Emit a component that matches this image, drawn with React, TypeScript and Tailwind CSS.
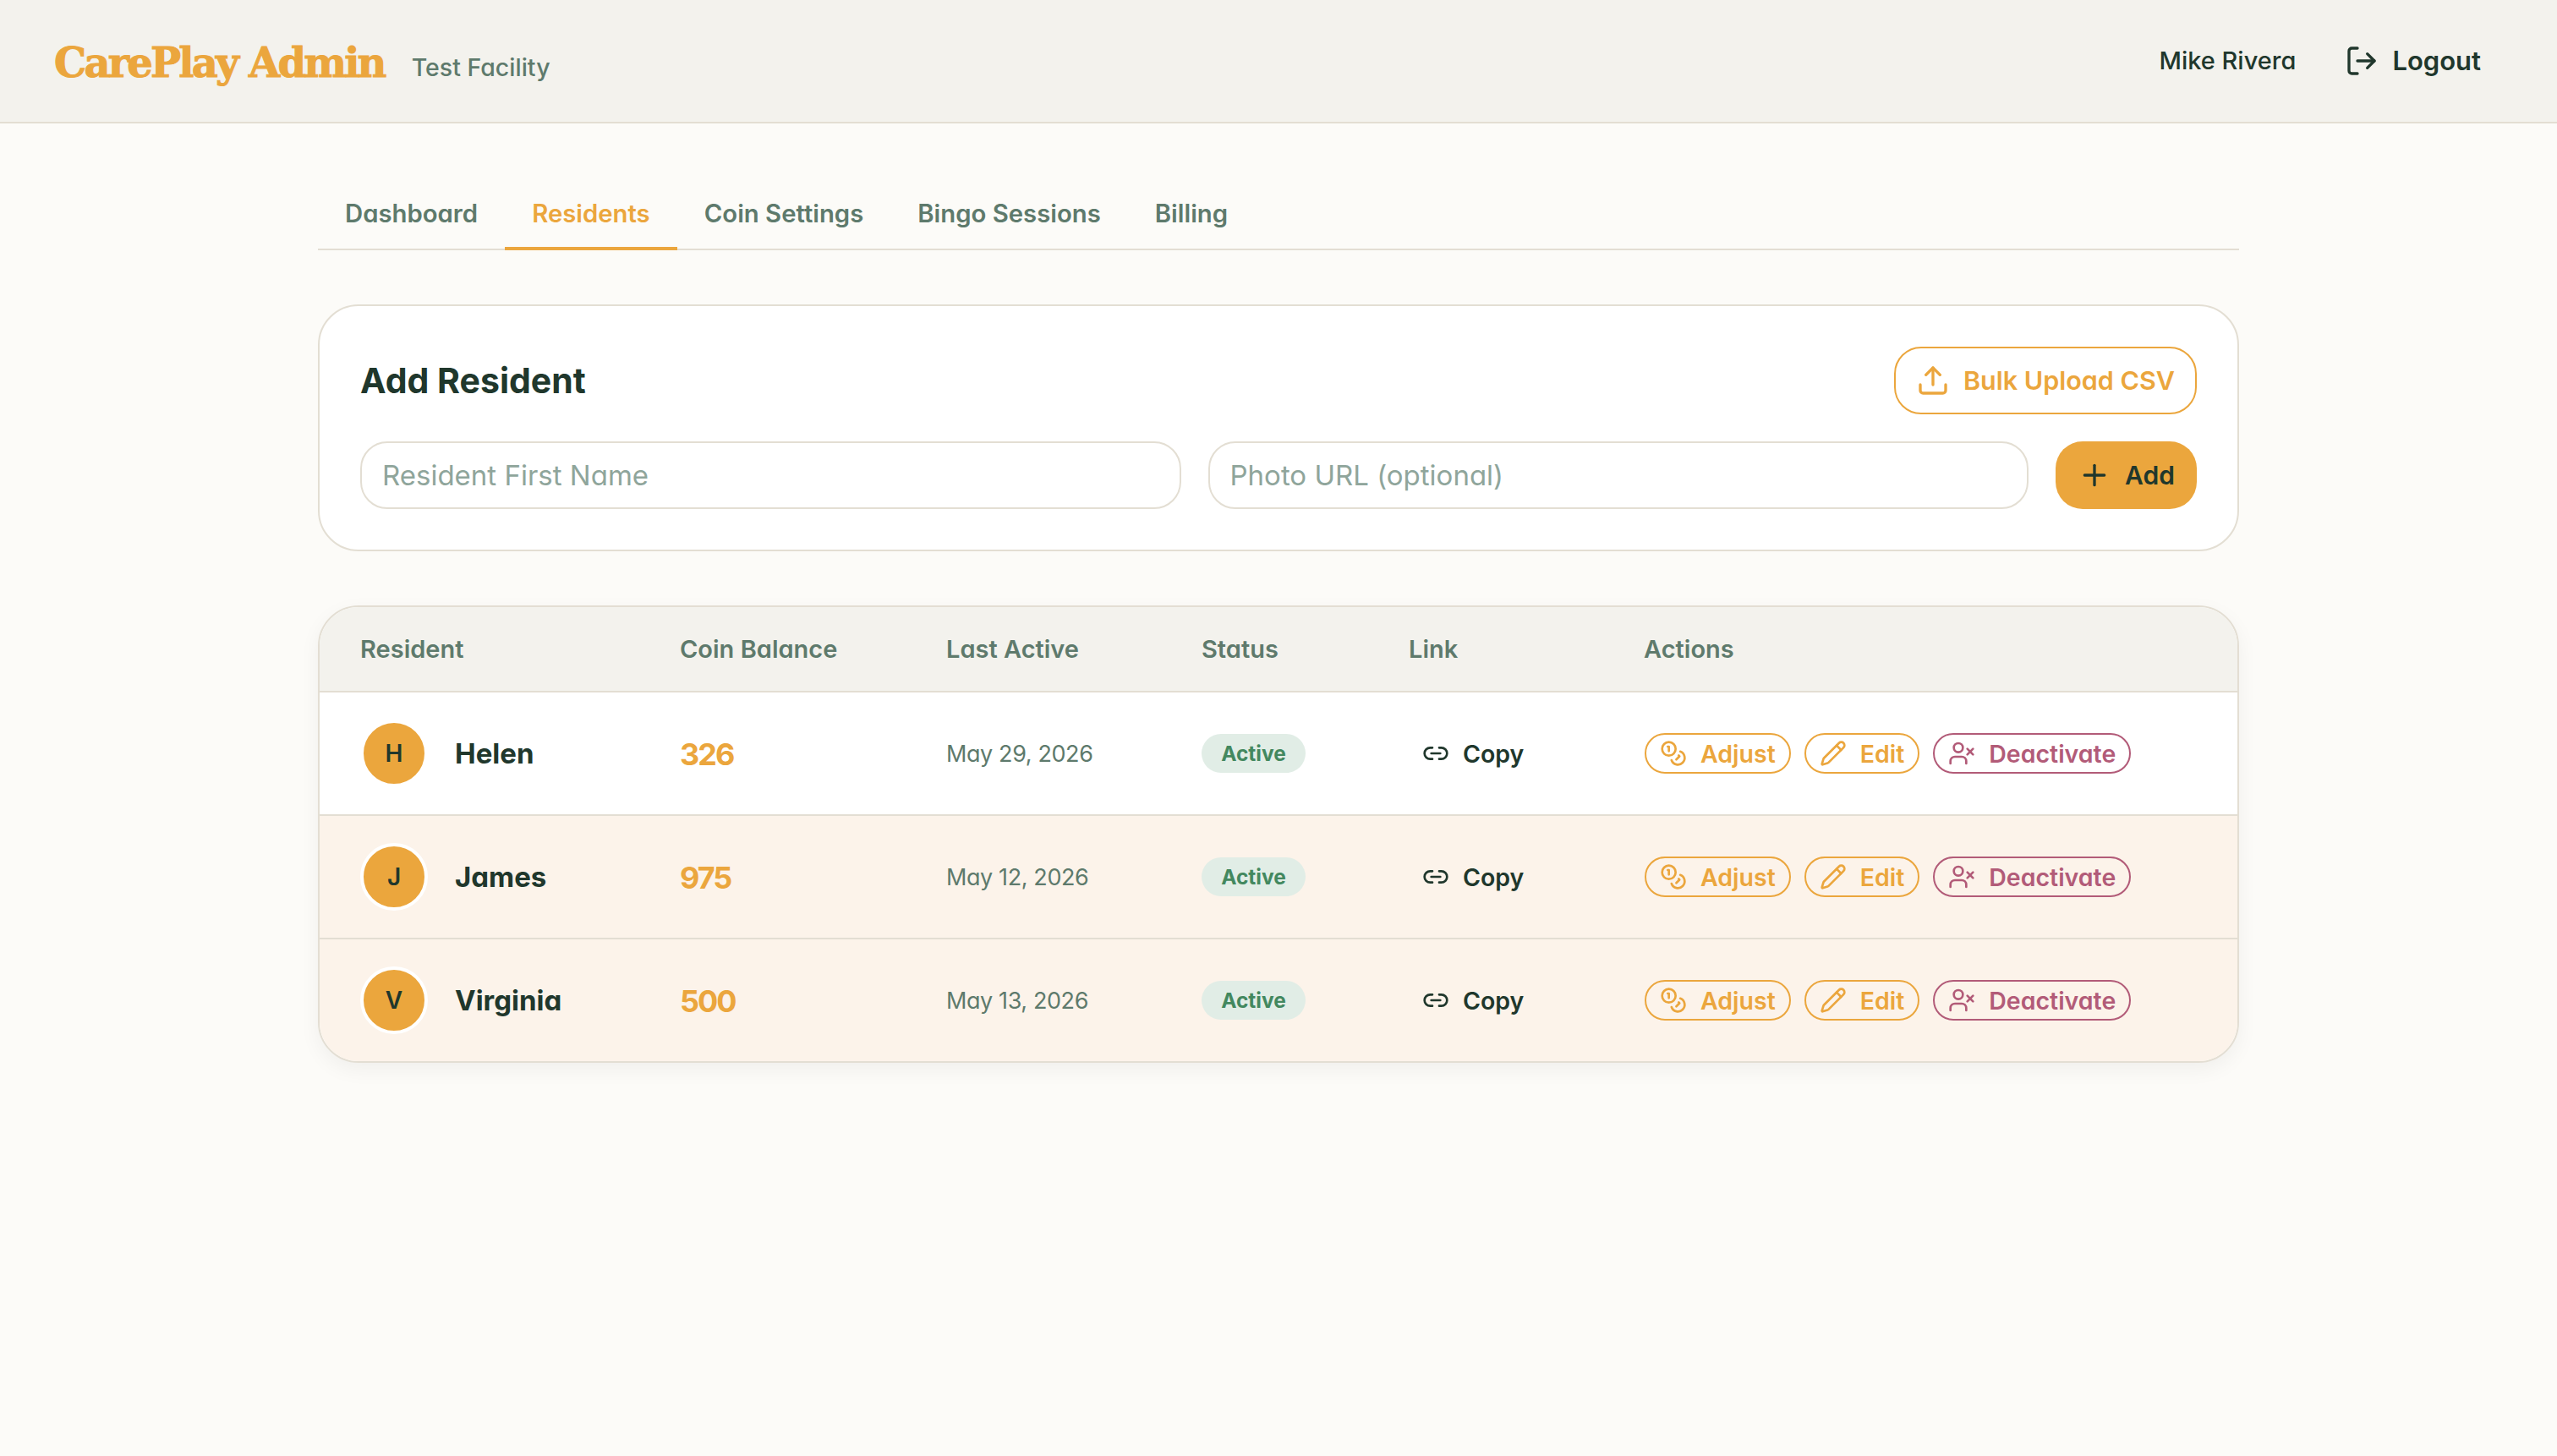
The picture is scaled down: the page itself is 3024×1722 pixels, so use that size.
import { Coins, Link2, LogOut, Pencil, Plus, Upload, UserX } from 'lucide-react'

const tabs = ['Dashboard', 'Residents', 'Coin Settings', 'Bingo Sessions', 'Billing']

const residents = [
  { name: 'Helen', coins: 326, lastActive: 'May 29, 2026', bg: 'bg-white' },
  { name: 'James', coins: 975, lastActive: 'May 12, 2026', bg: 'bg-[#fcf3ea]' },
  { name: 'Virginia', coins: 500, lastActive: 'May 13, 2026', bg: 'bg-[#fcf3ea]' },
]

const gridCols = 'grid grid-cols-[378px_315px_302px_245px_278px_1fr] items-center'

const ActionButton = ({
  icon: Icon,
  label,
  danger,
}: {
  icon: typeof Coins
  label: string
  danger?: boolean
}) => (
  <button
    className={`flex h-12 items-center gap-4 rounded-full border-2 bg-transparent px-4 text-[28.5px] font-semibold ${
      danger ? 'border-[#b25b78] text-[#b25b78]' : 'border-[#eba63d] text-[#eba63d]'
    }`}
  >
    <Icon className="h-8 w-8" strokeWidth={2} />
    <span className="pt-0.5">{label}</span>
  </button>
)

export default function App() {
  return (
    <div className="min-h-[1722px] bg-[#fcfbf8] font-['Inter',sans-serif] text-[#20372c] [font-feature-settings:'cv11']">
      {/* header */}
      <header className="flex h-[146px] items-center justify-between border-b-2 border-[#e3ded3] bg-[#f3f2ed] pr-[90px] pl-16">
        <div className="flex items-end gap-8">
          <span className="pt-1 font-['DejaVu_Serif',serif] text-[48px] leading-[64px] font-bold tracking-[-2.8px] text-[#eba63d] [-webkit-text-stroke:1px_#eba63d]">
            CarePlay Admin
          </span>
          <span className="pb-0.5 text-[28.5px] leading-[48px] font-medium text-[#5e7a6c]">Test Facility</span>
        </div>
        <div className="flex items-center font-semibold">
          <span className="text-[29px] font-medium">Mike Rivera</span>
          <button className="ml-[58px] flex items-center gap-4 text-[31px]">
            <LogOut className="h-10 w-10" strokeWidth={2} />
            Logout
          </button>
        </div>
      </header>

      <main className="mx-auto w-[2272px] pt-[64px]">
        {/* tabs */}
        <nav className="flex h-[86px] border-b-2 border-[#e3ded3]">
          {tabs.map((tab) => (
            <button
              key={tab}
              className={`h-[86px] border-b-4 px-8 pt-1 text-[29.3px] font-semibold ${
                tab === 'Residents' ? 'border-[#eba63d] text-[#eba63d]' : 'border-transparent text-[#5e7a6c]'
              }`}
            >
              {tab}
            </button>
          ))}
        </nav>

        {/* add resident */}
        <section className="mt-[64px] rounded-[48px] border-2 border-[#e3ded3] bg-white p-12">
          <div className="flex items-center justify-between">
            <h2 className="pt-0.5 text-[41px] font-bold">Add Resident</h2>
            <button className="flex h-20 items-center gap-4 rounded-[32px] border-2 border-[#eba63d] px-6 text-[30.5px] font-semibold text-[#eba63d]">
              <Upload className="h-10 w-10" strokeWidth={2} />
              Bulk Upload CSV
            </button>
          </div>
          <div className="mt-8 flex gap-8">
            <input
              placeholder="Resident First Name"
              className="h-20 min-w-0 flex-1 rounded-[32px] border-2 border-[#e3ded3] bg-white px-6 text-[33px] outline-none placeholder:text-[#8fa59b]"
            />
            <input
              placeholder="Photo URL (optional)"
              className="h-20 min-w-0 flex-1 rounded-[32px] border-2 border-[#e3ded3] bg-white px-6 text-[33px] outline-none placeholder:text-[#8fa59b]"
            />
            <button className="flex h-20 w-[167px] shrink-0 items-center justify-center gap-4 rounded-[32px] bg-[#eba63d] text-[30px] font-semibold">
              <Plus className="h-10 w-10" strokeWidth={2} />
              Add
            </button>
          </div>
        </section>

        {/* residents table */}
        <section className="mt-[64px] overflow-hidden rounded-[48px] border-2 border-[#e3ded3] bg-white shadow-[0_8px_24px_rgba(0,0,0,0.05)]">
          <div className={`${gridCols} h-[101px] border-b-2 border-[#e3ded3] bg-[#f3f2ed] text-[29px] font-semibold text-[#5e7a6c]`}>
            <div className="pl-12">Resident</div>
            <div className="pl-12">Coin Balance</div>
            <div className="pl-12">Last Active</div>
            <div className="pl-12">Status</div>
            <div className="pl-12">Link</div>
            <div className="pl-12">Actions</div>
          </div>
          {residents.map((resident, index) => (
            <div
              key={resident.name}
              className={`${gridCols} ${resident.bg} ${
                index < residents.length - 1 ? 'h-[146px] border-b-2 border-[#e3ded3]' : 'h-[144px]'
              }`}
            >
              <div className="flex items-center gap-8 pl-12">
                <div className="flex h-20 w-20 items-center justify-center rounded-full border-4 border-white bg-[#eba63d] text-[28px] font-semibold">
                  {resident.name[0]}
                </div>
                <span className="pt-0.5 text-[33px] font-bold">{resident.name}</span>
              </div>
              <div className="pt-0.5 pl-12 text-[36px] font-bold tracking-[-2px] text-[#eba63d]">{resident.coins}</div>
              <div className="pt-0.5 pl-12 text-[27px] tracking-[-0.4px] text-[#5e7a6c]">{resident.lastActive}</div>
              <div className="pl-12">
                <span className="inline-flex h-[46px] w-[123px] items-center justify-center rounded-full bg-[#e1ede6] text-[24.5px] font-bold text-[#43885f]">
                  Active
                </span>
              </div>
              <div className="pl-12">
                <button className="flex items-center gap-4 pl-4 text-[28.5px] font-semibold">
                  <Link2 className="h-8 w-8" strokeWidth={2} />
                  <span className="pt-0.5">Copy</span>
                </button>
              </div>
              <div className="flex gap-4 pl-[49px]">
                <ActionButton icon={Coins} label="Adjust" />
                <ActionButton icon={Pencil} label="Edit" />
                <ActionButton icon={UserX} label="Deactivate" danger />
              </div>
            </div>
          ))}
        </section>
      </main>
    </div>
  )
}
